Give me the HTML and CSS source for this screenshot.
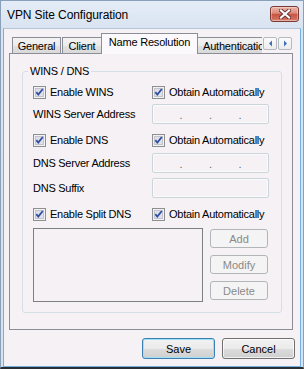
FILE: index.html
```html
<!DOCTYPE html>
<html>
<head>
<meta charset="utf-8">
<link rel="stylesheet" href="styles.css">
</head>
<body>
<div class="window">
  <div class="titlebar">
    <span class="title">VPN Site Configuration</span>
    <span class="close">
      <svg width="12" height="10" viewBox="0 0 12 10">
        <path d="M2 1.5 L10 8.5 M10 1.5 L2 8.5" stroke="#6a3030" stroke-width="4" stroke-linecap="square"/>
        <path d="M2 1.5 L10 8.5 M10 1.5 L2 8.5" stroke="#ffffff" stroke-width="2.2" stroke-linecap="square"/>
      </svg>
    </span>
  </div>
  <div class="client">
    <div class="tabrow">
      <div class="tabclip">
        <div class="tab t-general">General</div>
        <div class="tab t-client">Client</div>
        <div class="tab selected t-name">Name Resolution</div>
        <div class="tab t-auth">Authentication</div>
      </div>
      <span class="arrow">
        <svg width="5" height="7" viewBox="0 0 5 7"><path d="M4 0.5 L1 3.5 L4 6.5 Z" fill="#3f6fb5"/></svg>
      </span>
      <span class="arrow">
        <svg width="5" height="7" viewBox="0 0 5 7"><path d="M1 0.5 L4 3.5 L1 6.5 Z" fill="#3f6fb5"/></svg>
      </span>
    </div>
    <div class="panel">
      <div class="group">
        <span class="legend">WINS / DNS</span>
        <div class="row r1">
          <label class="cell chk">
            <svg class="cb" width="13" height="13" viewBox="0 0 13 13"><rect x="0.5" y="0.5" width="12" height="12" fill="#f2f2f5" stroke="#8e8f8f"/><rect x="2.5" y="2.5" width="8" height="8" fill="#dfe0ea" stroke="#c2c3cf"/><path d="M3.3 6.2 L5.3 8.6 L9.8 3" fill="none" stroke="#2f4fa3" stroke-width="1.8"/></svg>
            <span>Enable WINS</span>
          </label>
          <label class="cell chk">
            <svg class="cb" width="13" height="13" viewBox="0 0 13 13"><rect x="0.5" y="0.5" width="12" height="12" fill="#f2f2f5" stroke="#8e8f8f"/><rect x="2.5" y="2.5" width="8" height="8" fill="#dfe0ea" stroke="#c2c3cf"/><path d="M3.3 6.2 L5.3 8.6 L9.8 3" fill="none" stroke="#2f4fa3" stroke-width="1.8"/></svg>
            <span>Obtain Automatically</span>
          </label>
        </div>
        <div class="row r2">
          <span class="cell">WINS Server Address</span>
          <div class="field ip"><span>.</span><span>.</span><span>.</span></div>
        </div>
        <div class="row r3">
          <label class="cell chk">
            <svg class="cb" width="13" height="13" viewBox="0 0 13 13"><rect x="0.5" y="0.5" width="12" height="12" fill="#f2f2f5" stroke="#8e8f8f"/><rect x="2.5" y="2.5" width="8" height="8" fill="#dfe0ea" stroke="#c2c3cf"/><path d="M3.3 6.2 L5.3 8.6 L9.8 3" fill="none" stroke="#2f4fa3" stroke-width="1.8"/></svg>
            <span>Enable DNS</span>
          </label>
          <label class="cell chk">
            <svg class="cb" width="13" height="13" viewBox="0 0 13 13"><rect x="0.5" y="0.5" width="12" height="12" fill="#f2f2f5" stroke="#8e8f8f"/><rect x="2.5" y="2.5" width="8" height="8" fill="#dfe0ea" stroke="#c2c3cf"/><path d="M3.3 6.2 L5.3 8.6 L9.8 3" fill="none" stroke="#2f4fa3" stroke-width="1.8"/></svg>
            <span>Obtain Automatically</span>
          </label>
        </div>
        <div class="row r4">
          <span class="cell">DNS Server Address</span>
          <div class="field ip"><span>.</span><span>.</span><span>.</span></div>
        </div>
        <div class="row r5">
          <span class="cell">DNS Suffix</span>
          <div class="field"></div>
        </div>
        <div class="row r6">
          <label class="cell chk">
            <svg class="cb" width="13" height="13" viewBox="0 0 13 13"><rect x="0.5" y="0.5" width="12" height="12" fill="#f2f2f5" stroke="#8e8f8f"/><rect x="2.5" y="2.5" width="8" height="8" fill="#dfe0ea" stroke="#c2c3cf"/><path d="M3.3 6.2 L5.3 8.6 L9.8 3" fill="none" stroke="#2f4fa3" stroke-width="1.8"/></svg>
            <span>Enable Split DNS</span>
          </label>
          <label class="cell chk">
            <svg class="cb" width="13" height="13" viewBox="0 0 13 13"><rect x="0.5" y="0.5" width="12" height="12" fill="#f2f2f5" stroke="#8e8f8f"/><rect x="2.5" y="2.5" width="8" height="8" fill="#dfe0ea" stroke="#c2c3cf"/><path d="M3.3 6.2 L5.3 8.6 L9.8 3" fill="none" stroke="#2f4fa3" stroke-width="1.8"/></svg>
            <span>Obtain Automatically</span>
          </label>
        </div>
        <div class="listarea">
          <div class="listbox"></div>
          <div class="sidebtns">
            <div class="btn disabled">Add</div>
            <div class="btn disabled">Modify</div>
            <div class="btn disabled">Delete</div>
          </div>
        </div>
      </div>
    </div>
    <div class="footer">
      <div class="btn big default">Save</div>
      <div class="btn big">Cancel</div>
    </div>
  </div>
</div>
</body>
</html>
```

FILE: styles.css
```css
* { box-sizing: border-box; }
html, body { margin: 0; padding: 0; }
body {
  width: 304px;
  height: 369px;
  overflow: hidden;
  font-family: "Liberation Sans", Arial, sans-serif;
  font-size: 11px;
  color: #000;
  background: #dde7f2;
}
.window {
  width: 304px;
  height: 369px;
  display: flex;
  flex-direction: column;
  background: linear-gradient(#e4ecf6, #d9e4f1 28px, #d6e2f0);
  border: 1px solid #8aa0ba;
  border-bottom: 2px solid #2a2f36;
}
.titlebar {
  height: 27px;
  flex: none;
  display: flex;
  align-items: center;
  padding-left: 6px;
}
.title {
  font-size: 12px;
  letter-spacing: -0.1px;
  padding-top: 1px;
}
.close {
  margin-left: auto;
  margin-right: 4px;
  align-self: flex-start;
  margin-top: 5px;
  width: 29px;
  height: 16px;
  border: 1px solid #7b3a33;
  border-radius: 3px;
  background: linear-gradient(#eab3a6, #dc8c7c 45%, #c85442 50%, #d06a58 85%, #e0917d);
  display: flex;
  align-items: center;
  justify-content: center;
  box-shadow: inset 0 0 0 1px rgba(255,255,255,0.35);
}
.client {
  flex: 1;
  margin: 0 2px;
  background: #f5f1f5;
  border: 1px solid #72b0e2;
  border-top-color: #b4c6da;
  padding: 4px 5px 7px 5px;
  display: flex;
  flex-direction: column;
}
.tabrow {
  display: flex;
  height: 21px;
  margin-bottom: -1px;
  padding-left: 3px;
}
.tabclip {
  width: 250px;
  height: 21px;
  display: flex;
  align-items: flex-end;
  overflow: hidden;
  flex: none;
}
.tab {
  flex: none;
  height: 17px;
  border: 1px solid #8b8e96;
  border-bottom: none;
  background: linear-gradient(#f3f3f3, #ebebeb 50%, #e1e1e1 50%, #d8d8d8);
  display: flex;
  align-items: center;
  justify-content: center;
  letter-spacing: -0.2px;
  white-space: nowrap;
  padding-bottom: 1px;
}
.t-general { width: 49px; }
.t-client { width: 40px; margin-left: 1px; }
.t-name {
  width: 97px;
  margin-left: -1px;
}
.t-auth {
  width: 70px;
  margin-left: -1px;
  justify-content: flex-start;
  padding-left: 5px;
}
.tab.selected {
  height: 21px;
  background: #fbf9fb;
  position: relative;
  z-index: 1;
  align-items: flex-start;
  padding-top: 2px;
}
.arrow {
  flex: none;
  width: 14px;
  height: 13px;
  margin-top: 4px;
  margin-left: 1px;
  border: 1px solid #b5b9c0;
  border-radius: 2px;
  background: linear-gradient(#fbfbfb, #ececec);
  display: flex;
  align-items: center;
  justify-content: center;
}
.panel {
  width: 284px;
  height: 277px;
  border: 1px solid #8b8e96;
  background: #f5f1f5;
  padding-top: 17px;
}
.group {
  margin-left: 12px;
  width: 260px;
  border: 1px solid #d5dfe5;
  border-radius: 3px;
  padding: 0 10px 10px 10px;
  display: flex;
  flex-direction: column;
  align-items: flex-start;
}
.legend {
  margin: -7px 0 0 -5px;
  padding: 0 2px;
  line-height: 13px;
  background: #f5f1f5;
  letter-spacing: -0.2px;
}
.row {
  display: flex;
  align-items: center;
  width: 100%;
}
.r1 { height: 16px; margin-top: 6px; }
.r2 { height: 20px; margin-top: 4px; }
.r3 { height: 16px; margin-top: 8px; }
.r4 { height: 20px; margin-top: 5px; }
.r5 { height: 20px; margin-top: 5px; }
.r6 { height: 16px; margin-top: 8px; }
.cell {
  width: 119px;
  flex: none;
  letter-spacing: -0.25px;
  white-space: nowrap;
}
.chk {
  display: flex;
  align-items: center;
}
.chk span { margin-left: 4px; }
.cb { flex: none; display: block; }
.row .chk + .chk { width: auto; }
.field {
  width: 117px;
  height: 20px;
  border: 1px solid #cdd5dc;
  border-radius: 2px;
  background: #f5f1f5;
  box-shadow: inset 0 0 0 1px #fbfafb;
}
.ip {
  display: flex;
  justify-content: space-evenly;
  align-items: center;
  color: #6a6a6a;
  line-height: 13px;
  padding-top: 2px;
}
.listarea {
  display: flex;
  margin-top: 6px;
}
.listbox {
  width: 170px;
  height: 74px;
  border: 1px solid #7c7f86;
  background: #f5f1f5;
}
.sidebtns {
  margin-left: 7px;
  margin-top: 1px;
  display: flex;
  flex-direction: column;
  gap: 7px;
}
.btn {
  width: 58px;
  height: 19px;
  border: 1px solid #707070;
  border-radius: 3px;
  background: linear-gradient(#f2f2f2, #ebebeb 50%, #dddddd 50%, #cfcfcf);
  display: flex;
  align-items: center;
  justify-content: center;
  box-shadow: inset 0 0 0 1px rgba(255,255,255,0.7);
}
.btn.disabled {
  border-color: #b3b6b9;
  background: #f4f4f4;
  color: #8a8a8a;
  box-shadow: none;
}
.footer {
  margin-top: 8px;
  display: flex;
  justify-content: flex-end;
  gap: 7px;
  padding-right: 0;
}
.btn.big {
  width: 73px;
  height: 21px;
}
.btn.default {
  border-color: #3c7fb1;
  box-shadow: inset 0 0 0 1px #9fe0f7;
  background: linear-gradient(#eaf6fd, #d9f0fc 50%, #bee6fd 50%, #a7d9f5);
  background: linear-gradient(#f2f2f2, #ebebeb 50%, #dddddd 50%, #cfcfcf);
}
```
